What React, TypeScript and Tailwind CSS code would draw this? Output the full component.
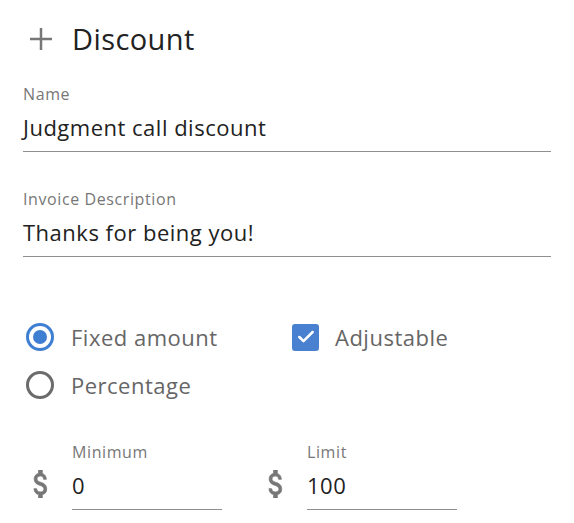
import { Check } from 'lucide-react';

function Field({ label, value }: { label: string; value: string }) {
  return (
    <div className="flex flex-col border-b border-[#8f8f8f] pb-[9px]">
      <span className="text-[16px] leading-[20px] tracking-[0.6px] text-[#777777]">{label}</span>
      <span className="mt-[8px] text-[22px] leading-[30px] tracking-[0.5px] text-[#222222]">{value}</span>
    </div>
  );
}

function Radio({ checked, label }: { checked?: boolean; label: string }) {
  return (
    <div className="flex h-[48px] items-center">
      <div
        className={
          checked
            ? 'ml-[3px] flex h-[28px] w-[28px] items-center justify-center rounded-full border-[3px] border-[#3f7fd2]'
            : 'ml-[3px] flex h-[28px] w-[28px] items-center justify-center rounded-full border-[3px] border-[#6b6b6b]'
        }
      >
        {checked && <div className="h-[14px] w-[14px] rounded-full bg-[#3f7fd2]" />}
      </div>
      <span className="ml-[17px] text-[22px] tracking-[0.5px] text-[#666666]">{label}</span>
    </div>
  );
}

function Dollar() {
  return (
    <svg
      width="15"
      height="28"
      viewBox="5.6 3 11.9 18"
      preserveAspectRatio="none"
      fill="#777777"
      stroke="#777777"
      strokeWidth="0.5"
    >
      <path d="M11.8 10.9c-2.27-.59-3-1.2-3-2.15 0-1.09 1.01-1.85 2.7-1.850 1.78 0 2.44.85 2.5 2.1h2.21c-.07-1.72-1.12-3.3-3.21-3.81V3h-3v2.16c-1.94.42-3.5 1.68-3.5 3.61 0 2.31 1.91 3.46 4.7 4.13 2.5.6 3 1.48 3 2.41 0 .69-.49 1.79-2.7 1.79-2.06 0-2.87-.92-2.98-2.1h-2.2c.12 2.19 1.76 3.42 3.68 3.83V21h3v-2.15c1.95-.37 3.5-1.5 3.5-3.55 0-2.84-2.43-3.81-4.7-4.4z" />
    </svg>
  );
}

function Money({ label, value }: { label: string; value: string }) {
  return (
    <div className="flex w-[199px] items-end">
      <div className="flex w-[49px] pb-[12px] pl-[10px]">
        <Dollar />
      </div>
      <div className="flex w-[150px] flex-col border-b border-[#8f8f8f] pb-[9px]">
        <span className="text-[16px] leading-[20px] tracking-[0.6px] text-[#777777]">{label}</span>
        <span className="mt-[8px] text-[22px] leading-[30px] tracking-[0.5px] text-[#222222]">{value}</span>
      </div>
    </div>
  );
}

export default function App() {
  return (
    <div className="min-h-screen bg-white px-[23px] pt-[13px] font-['Open_Sans','Noto_Sans',sans-serif]">
      <div className="flex h-[52px] items-center">
        <svg width="22" height="22" viewBox="0 0 22 22" className="ml-[7px]" stroke="#777777" strokeWidth="2.5">
          <line x1="0" y1="11" x2="22" y2="11" />
          <line x1="11" y1="0" x2="11" y2="22" />
        </svg>
        <h1 className="ml-[20px] text-[29px] tracking-[0.4px] text-[#222222]">Discount</h1>
      </div>

      <div className="mt-[19px]">
        <Field label="Name" value="Judgment call discount" />
      </div>
      <div className="mt-[37px]">
        <Field label="Invoice Description" value="Thanks for being you!" />
      </div>

      <div className="mt-[56px] grid grid-cols-[269px_1fr]">
        <div className="flex flex-col">
          <Radio checked label="Fixed amount" />
          <Radio label="Percentage" />
        </div>
        <div className="flex h-[48px] items-center">
          <div className="flex h-[27px] w-[27px] items-center justify-center rounded-[3px] bg-[#4a80d0]">
            <Check size={20} strokeWidth={3} color="white" />
          </div>
          <span className="ml-[16px] text-[22px] tracking-[0.5px] text-[#666666]">Adjustable</span>
        </div>
      </div>

      <div className="mt-[33px] flex gap-[36px]">
        <Money label="Minimum" value="0" />
        <Money label="Limit" value="100" />
      </div>
    </div>
  );
}
